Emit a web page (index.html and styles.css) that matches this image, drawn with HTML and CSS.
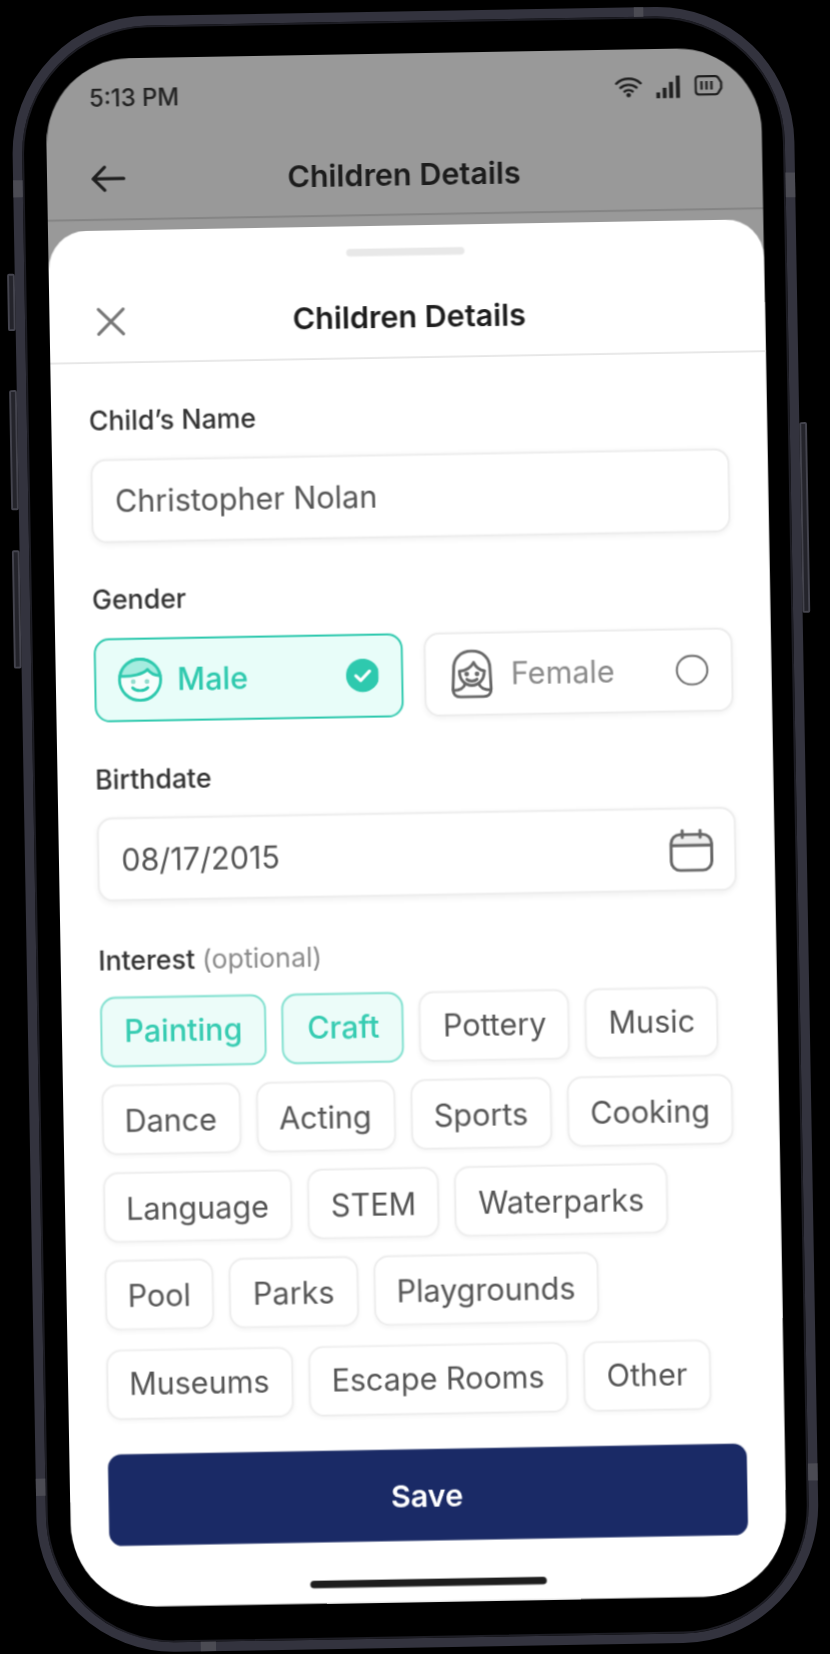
FILE: index.html
```html
<!DOCTYPE html>
<html lang="en">
<head>
    <meta charset="UTF-8">
    <meta name="viewport" content="width=device-width, initial-scale=1.0">
    <title>Children Details</title>
    <link rel="stylesheet" href="styles.css">
</head>
<body>
    <div class="phone">
        <!-- side buttons and antenna bands sit on the frame -->
        <span class="side-btn btn-mute"></span>
        <span class="side-btn btn-vol-up"></span>
        <span class="side-btn btn-vol-down"></span>
        <span class="side-btn btn-power"></span>
        <span class="band band-top"></span>
        <span class="band band-left"></span>
        <span class="band band-right"></span>
        <span class="band band-bottom"></span>
        <span class="band band-left-low"></span>
        <span class="band band-right-low"></span>

        <div class="screen">
            <div class="status-bar">
                <span class="time">5:13 PM</span>
                <div class="status-icons">
                    <svg width="15" height="11" viewBox="0 0 16 12" fill="none" stroke="#1f1f1f" stroke-width="1.4" stroke-linecap="round">
                        <path d="M1 4.2C5 .6 11 .6 15 4.2"/>
                        <path d="M3.4 6.6C6 4.4 10 4.4 12.6 6.6"/>
                        <path d="M5.7 8.8C7 7.8 9 7.8 10.3 8.8"/>
                        <circle cx="8" cy="10.9" r=".6" fill="#1f1f1f"/>
                    </svg>
                    <svg width="13" height="12" viewBox="0 0 13 12" fill="#1f1f1f">
                        <rect x="0" y="8.8" width="2" height="3.2"/>
                        <rect x="3.4" y="6.4" width="2" height="5.6"/>
                        <rect x="6.8" y="3.4" width="2" height="8.6"/>
                        <rect x="10.4" y="0" width="2" height="12"/>
                    </svg>
                    <svg width="15" height="11" viewBox="0 0 15 11" fill="none" stroke="#1f1f1f" stroke-width="1.2">
                        <path d="M2.4.7H11a2 2 0 0 1 1.6.9l1.5 2.4v3l-1.5 2.4a2 2 0 0 1-1.6.9H2.4a1.7 1.7 0 0 1-1.7-1.7V2.4a1.7 1.7 0 0 1 1.7-1.7z"/>
                        <path d="M3.8 3.3v4.4M6.4 3.3v4.4M9 3.3v4.4"/>
                    </svg>
                </div>
            </div>

            <div class="nav-bar">
                <svg class="nav-icon" width="24" height="24" viewBox="0 0 24 24" fill="none" stroke="#1f1f1f" stroke-width="1.7" stroke-linecap="round" stroke-linejoin="round">
                    <path d="M20 12H4M10 6l-6 6 6 6"/>
                </svg>
                <h1 class="title">Children Details</h1>
            </div>

            <div class="sheet">
                <div class="handle"></div>
                <div class="sheet-head">
                    <svg width="24" height="24" viewBox="0 0 24 24" fill="none" stroke="#757575" stroke-width="1.6" stroke-linecap="round">
                        <path d="M5.5 5.5l13 13M18.5 5.5l-13 13"/>
                    </svg>
                    <h2 class="title">Children Details</h2>
                </div>

                <form class="form">
                    <div class="field">
                        <label class="label">Child’s Name</label>
                        <div class="box">Christopher Nolan</div>
                    </div>

                    <div class="field">
                        <label class="label">Gender</label>
                        <div class="gender-row">
                            <div class="gender gender-on">
                                <svg width="24" height="24" viewBox="0 0 24 24" fill="none" stroke="#2ec9ae" stroke-width="1.5" stroke-linecap="round" stroke-linejoin="round">
                                    <circle cx="12" cy="12" r="10.8" fill="#f6fefc"/>
                                    <path d="M1.5 10C2.2 5 6.8 1.2 12 1.2S21.8 5 22.5 10C19.5 9.8 17.3 8.7 16 6.6 14 9 7.5 10.5 1.5 10z" fill="#a5ecdf"/>
                                    <circle cx="8.4" cy="13" r=".5" fill="#8fdccd" stroke="#8fdccd"/>
                                    <circle cx="15.6" cy="13" r=".5" fill="#8fdccd" stroke="#8fdccd"/>
                                    <path d="M8 16.2c1.8 2 6.2 2 8 0"/>
                                </svg>
                                <span>Male</span>
                                <svg class="mark" width="17.5" height="17.5" viewBox="0 0 18 18">
                                    <circle cx="9" cy="9" r="9" fill="#2ec9ae"/>
                                    <path d="M5.3 9.2l2.6 2.5 4.8-5" fill="none" stroke="#fff" stroke-width="1.7" stroke-linecap="round" stroke-linejoin="round"/>
                                </svg>
                            </div>
                            <div class="gender">
                                <svg width="24" height="26" viewBox="0 0 24 26" fill="none" stroke="#666" stroke-width="1.5" stroke-linecap="round" stroke-linejoin="round">
                                    <path d="M12 1C6 1 2.5 5 2.5 10L2 21c0 2.5 1.5 4 4 4h12c2.500 0 4-1.500 4-4l-.5-11c0-5-3.500-9-9.500-9z"/>
                                    <path d="M5.5 11.500c3.500-.3 6-1.700 7.500-4.500 1 2.200 3 4 5.500 4.500"/>
                                    <path d="M5.5 11.500c0 4.500 2.800 7.500 6.500 7.500s6.500-3 6.500-7.500"/>
                                    <path d="M2.200 21.500c3 0 5.300-.7 6.300-3.400M21.800 21.500c-3 0-5.300-.7-6.300-3.400"/>
                                    <circle cx="9.300" cy="13" r=".5" fill="#666"/>
                                    <circle cx="14.700" cy="13" r=".5" fill="#666"/>
                                    <path d="M9.300 15.800c1.400 1.300 4 1.300 5.400 0"/>
                                </svg>
                                <span>Female</span>
                                <span class="mark radio"></span>
                            </div>
                        </div>
                    </div>

                    <div class="field">
                        <label class="label">Birthdate</label>
                        <div class="box box-date">
                            <span>08/17/2015</span>
                            <svg width="25" height="25" viewBox="0 0 24 24" fill="none" stroke="#666" stroke-width="1.5" stroke-linecap="round">
                                <path d="M2.500 9.500V8.500a4 4 0 0 1 4-4h11a4 4 0 0 1 4 4v1z" fill="#eee" stroke="none"/>
                                <rect x="1.800" y="4" width="20.400" height="18" rx="4.500"/>
                                <path d="M2 9.500h20M7.500 2v3.500M16.500 2v3.500"/>
                            </svg>
                        </div>
                    </div>

                    <div class="field field-last">
                        <label class="label">Interest <span class="optional">(optional)</span></label>
                        <div class="chips">
                            <span class="chip chip-on">Painting</span>
                            <span class="chip chip-on">Craft</span>
                            <span class="chip">Pottery</span>
                            <span class="chip">Music</span>
                            <span class="chip">Dance</span>
                            <span class="chip">Acting</span>
                            <span class="chip">Sports</span>
                            <span class="chip">Cooking</span>
                            <span class="chip">Language</span>
                            <span class="chip">STEM</span>
                            <span class="chip">Waterparks</span>
                            <span class="chip">Pool</span>
                            <span class="chip">Parks</span>
                            <span class="chip">Playgrounds</span>
                            <span class="chip">Museums</span>
                            <span class="chip">Escape Rooms</span>
                            <span class="chip">Other</span>
                        </div>
                    </div>

                    <button class="save" type="button">Save</button>
                </form>
                <div class="home-bar"></div>
            </div>
        </div>
    </div>
</body>
</html>
```

FILE: styles.css
```css
* {
    box-sizing: border-box;
}
html, body {
    margin: 0;
    height: 100%;
    background-color: #000;
    overflow: hidden;
}
body {
    display: flex;
    align-items: center;
    justify-content: center;
    font-family: Inter, "Liberation Sans", sans-serif;
}

/* the phone is drawn at 375x812 and then tilted and scaled up */
.phone {
    position: relative;
    flex: none;
    width: 410px;
    height: 858px;
    padding: 17px 12.5px 19px;
    background-color: #000;
    border: 5px solid #33333e;
    border-radius: 72px;
    box-shadow: inset 0 0 0 1px #1d1d24;
    transform: translate(0.4px, 2.4px) rotate(-1deg) scale(1.907);
}
.side-btn {
    position: absolute;
    width: 4px;
    background-color: #24242b;
    border: 0.5px solid #44444e;
    border-radius: 1px;
}
.btn-mute { left: -9px; top: 129px; height: 30px; }
.btn-vol-up { left: -9px; top: 190px; height: 63px; }
.btn-vol-down { left: -9px; top: 274px; height: 62px; }
.btn-power { right: -9px; top: 214px; height: 100px; }
.band {
    position: absolute;
    background-color: #4b4b53;
}
.band-top { left: 322px; top: -5px; width: 5px; height: 5px; }
.band-bottom { left: 80px; bottom: -5px; width: 8px; height: 5px; }
.band-left { left: -5px; top: 80px; width: 5px; height: 9px; }
.band-right { right: -5px; top: 83px; width: 5px; height: 13px; }
.band-left-low { left: -5px; bottom: 78px; width: 5px; height: 9px; }
.band-right-low { right: -5px; bottom: 79px; width: 5px; height: 9px; }

.screen {
    display: flex;
    flex-direction: column;
    width: 375px;
    height: 812px;
    background-color: #999;
    border-radius: 44px;
    overflow: hidden;
    filter: blur(0.4px);
}
.status-bar {
    display: flex;
    align-items: center;
    justify-content: space-between;
    height: 43px;
    padding: 0 20px 2px 23px;
}
.time {
    font-size: 12.5px;
    font-weight: 500;
    color: #222;
}
.status-icons {
    display: flex;
    align-items: center;
    gap: 7px;
    margin-top: -2px;
}
.nav-bar {
    position: relative;
    display: flex;
    align-items: center;
    justify-content: center;
    height: 42.3px;
    border-bottom: 1px solid #848484;
    padding-bottom: 1.8px;
}
.nav-icon {
    position: absolute;
    left: 20px;
}
.title {
    margin: 0;
    font-size: 16px;
    line-height: 20px;
    font-weight: 600;
    color: #1c1c1c;
}
.sheet {
    flex: 1;
    margin-top: 4.4px;
    background-color: #fff;
    border-radius: 20px 20px 0 0;
    padding-top: 12.3px;
}
.handle {
    width: 62px;
    height: 4px;
    margin: 0 auto;
    background-color: #e8e8e8;
    border-radius: 2px;
}
.sheet-head {
    position: relative;
    display: flex;
    align-items: center;
    justify-content: center;
    padding: 22px 20px 11.1px 23px;
    border-bottom: 1px solid #e6e6e6;
}
.sheet-head svg {
    position: absolute;
    left: 20px;
    top: 20.5px;
}
.form {
    padding: 20.1px 20px 0;
}
.field {
    margin-bottom: 20.3px;
}
.field-last {
    margin-bottom: 18.7px;
}
.label {
    display: block;
    margin-bottom: 10px;
    font-size: 14px;
    line-height: 20px;
    font-weight: 500;
    color: #333;
}
.optional {
    font-weight: 400;
    color: #8a8a8a;
}
.box {
    display: flex;
    align-items: center;
    justify-content: space-between;
    height: 44px;
    padding: 0 12px;
    font-size: 16px;
    color: #555;
    background-color: #fff;
    border: 1px solid #ededed;
    border-radius: 8px;
    box-shadow: 0 1px 3px rgba(0, 0, 0, 0.05);
}
.box-date {
    padding-right: 10px;
}
.gender-row {
    display: grid;
    grid-template-columns: 1fr 1fr;
    gap: 11px;
}
.gender {
    display: flex;
    align-items: center;
    gap: 9px;
    height: 43.5px;
    padding: 0 12px;
    font-size: 16px;
    color: #8a8a8a;
    background-color: #fff;
    border: 1px solid #ededed;
    border-radius: 8px;
    box-shadow: 0 1px 3px rgba(0, 0, 0, 0.05);
}
.gender-on {
    gap: 8px;
    padding: 0 11.5px 0 11px;
    font-weight: 500;
    color: #2ec9ae;
    background-color: #e8fdf9;
    border-color: #2ec9ae;
    box-shadow: none;
}
.mark {
    margin-left: auto;
}
.radio {
    width: 16.5px;
    height: 16.5px;
    border: 1.5px solid #666;
    border-radius: 50%;
}
.chips {
    display: flex;
    flex-wrap: wrap;
    gap: 9.2px 8px;
    margin-top: -0.75px;
}
.chip {
    display: flex;
    align-items: center;
    height: 37px;
    padding: 0 11.3px;
    font-size: 16px;
    color: #555;
    background-color: #fff;
    border: 1px solid #eeeeee;
    border-radius: 8px;
    box-shadow: 0 1px 2px rgba(0, 0, 0, 0.03);
}
.chip-on {
    padding: 0 12px;
    font-weight: 500;
    color: #37ccb2;
    background-color: #ecfcf9;
    border: 1.5px solid #7fe0cf;
    box-shadow: none;
}
.save {
    display: block;
    width: 100%;
    height: 48px;
    font-family: inherit;
    font-size: 16px;
    font-weight: 600;
    color: #fff;
    background-color: #1a2a66;
    border: none;
    border-radius: 7px;
}
.home-bar {
    width: 124px;
    height: 4px;
    margin: 19.3px auto 0;
    background-color: #1e1e1e;
    border-radius: 2px;
}
```
